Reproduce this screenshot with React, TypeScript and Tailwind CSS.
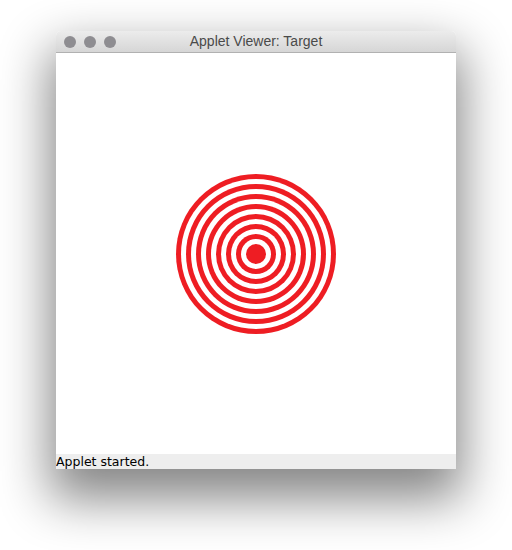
const RING_SIZES = [160, 150, 140, 130, 120, 110, 100, 90, 80, 70, 60, 50, 40, 30, 20];

function Target() {
  return (
    <svg width="160" height="160" viewBox="0 0 160 160">
      {RING_SIZES.map((d, i) => (
        <circle key={d} cx="80" cy="80" r={d / 2} fill={i % 2 === 0 ? "#ee1d23" : "#ffffff"} />
      ))}
    </svg>
  );
}

export default function App() {
  return (
    <div className="h-[550px] w-[512px] bg-white pl-[56px] pt-[31px]">
      <div className="flex w-[400px] flex-col overflow-hidden rounded-t-[5px] shadow-[0_24px_50px_6px_rgba(0,0,0,0.48)]">
        {/* title bar */}
        <div className="relative flex h-[22px] items-center border-b border-[#b1b1b1] bg-gradient-to-b from-[#ececec] to-[#d6d6d6]">
          <div className="flex gap-2 pl-2">
            <span className="h-3 w-3 rounded-full bg-[#8e8d91]" />
            <span className="h-3 w-3 rounded-full bg-[#8e8d91]" />
            <span className="h-3 w-3 rounded-full bg-[#8e8d91]" />
          </div>
          <div className="absolute inset-0 flex items-center justify-center font-['Liberation_Sans',Arial,sans-serif] text-[14px] text-[#4a4a4a]">
            Applet Viewer: Target
          </div>
        </div>
        {/* applet area */}
        <div className="flex h-[401px] items-center justify-center bg-white">
          <Target />
        </div>
        {/* status bar */}
        <div className="flex h-[15px] items-end bg-[#eeeeee] pb-px font-['DejaVu_Sans',sans-serif] text-[12.5px] leading-none text-black">
          Applet started.
        </div>
      </div>
    </div>
  );
}
